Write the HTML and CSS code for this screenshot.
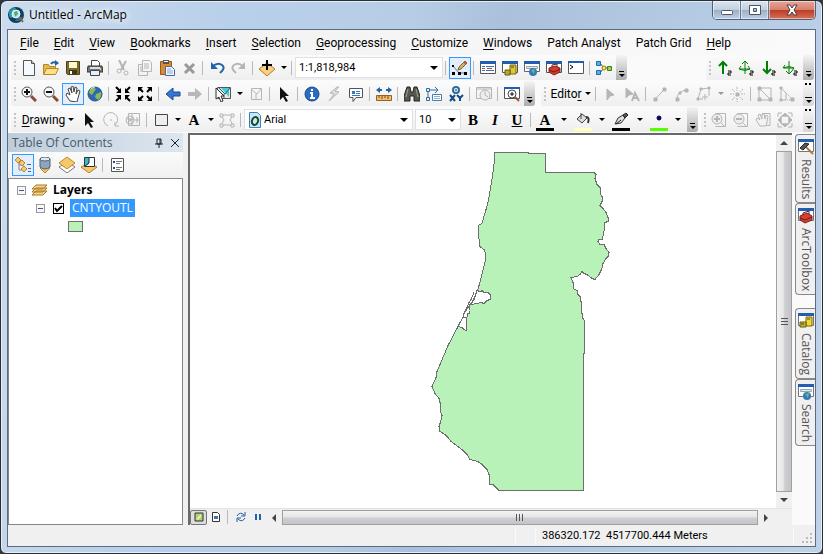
FILE: index.html
```
<!DOCTYPE html>
<html lang="en">
<head>
  <meta charset="UTF-8">
  <title>Untitled - ArcMap</title>
  <link rel="stylesheet" href="styles.css">
</head>
<body>
<div class="window">

  <!-- Title bar -->
  <header class="titlebar">
    <svg class="app-icon" viewBox="0 0 16 16"><circle cx="8" cy="8" r="8" fill="#123c5c"/><path d="M1 5Q4 0 8 1Q5 5 6 9Q3 13 1 9z" fill="#2697a8"/><path d="M7 14Q9 10 15 10Q13 15 7 14z" fill="#2b6fa5"/><circle cx="8" cy="7" r="4" fill="#b7e6ee" stroke="#e6f5f8"/><path d="M6 5l3-1 1 3-3 3z" fill="#4eab69"/><path d="M11 10l4 5" stroke="#8b6334" stroke-width="2"/></svg>
    <h1>Untitled - ArcMap</h1>
    <div class="window-buttons">
      <button aria-label="Minimize"><svg viewBox="0 0 16 14"><rect x="2.500" y="7.500" width="11" height="4" rx="1" fill="#fff" stroke="#4b5468"/></svg></button>
      <button aria-label="Maximize"><svg viewBox="0 0 16 14"><path d="M2.500 2.500h11v9h-11zM6.500 5.500v3h3v-3z" fill="#fff" fill-rule="evenodd" stroke="#4b5468"/></svg></button>
      <button class="close" aria-label="Close"><svg viewBox="0 0 16 14"><path d="M3 2h3l2 3 2-3h3l-3 5 3 5h-3l-2-3-2 3H3l3-5z" fill="#fff" stroke="#4b3a48"/></svg></button>
    </div>
  </header>

  <div class="client">

    <!-- Menu -->
    <nav class="menu">
      <a href="#"><u>F</u>ile</a>
      <a href="#"><u>E</u>dit</a>
      <a href="#"><u>V</u>iew</a>
      <a href="#"><u>B</u>ookmarks</a>
      <a href="#"><u>I</u>nsert</a>
      <a href="#"><u>S</u>election</a>
      <a href="#"><u>G</u>eoprocessing</a>
      <a href="#"><u>C</u>ustomize</a>
      <a href="#"><u>W</u>indows</a>
      <a href="#">Patch Analyst</a>
      <a href="#">Patch Grid</a>
      <a href="#"><u>H</u>elp</a>
    </nav>

    <!-- Standard toolbar -->
    <div class="toolbar-row">
      <div class="toolbar">
        <span class="grip"></span>
        <button aria-label="New"><svg viewBox="0 0 16 16"><path d="M2.500.5h8l3 3v12h-11z" fill="#f5f9ff" stroke="#555"/><path d="M10.500.5v3h3" fill="#ccd" stroke="#555"/></svg></button>
        <button aria-label="Open"><svg viewBox="0 0 16 16"><path d="M.5 14.500v-10h5l1 2h6v2" fill="#e5b84f" stroke="#b58a25"/><path d="M.5 14.500l3-6h12l-3 6z" fill="#ffe08a" stroke="#b58a25"/><path d="M8 4q2-3 5-1" fill="none" stroke="#24609d" stroke-width="2"/><path d="M12 0l4 3-4 3z" fill="#24609d"/></svg></button>
        <button aria-label="Save"><svg viewBox="0 0 16 16"><path d="M1.500 1.500h13v13h-12l-1-1z" fill="#7c6a29" stroke="#4b421d"/><path d="M4 2h8v6H4z" fill="#fff5cc"/><path d="M4 10h8v4H4z" fill="#403719"/><path d="M5 11h2v3H5z" fill="#fff"/></svg></button>
        <button aria-label="Print"><svg viewBox="0 0 16 16"><path d="M4.500 6V.5h6l2 2V6" fill="#fff" stroke="#444"/><path d="M1 6h14l1 6H0z" fill="#777" stroke="#333"/><path d="M3 8h10" stroke="#ddd" stroke-width="2"/><path d="M3.500 10.500h9v5h-9z" fill="#e2efff" stroke="#444"/><path d="M13 9h1" stroke="#f8ce45" stroke-width="2"/></svg></button>
        <span class="sep"></span>
        <button aria-label="Cut"><svg class="off" viewBox="0 0 16 16"><path d="M4 0l5 10M11 1L6 10" stroke-width="2"/><circle cx="4" cy="11" r="2"/><circle cx="11" cy="13" r="2"/></svg></button>
        <button aria-label="Copy"><svg class="off" viewBox="0 0 16 16"><path d="M5.500.5h7l2 2v9h-9zM5 4.500H1.500v11h9V12M7 4h5M7 6h5M7 8h5M3 7h2M3 9h2M3 11h2"/></svg></button>
        <button aria-label="Paste"><svg viewBox="0 0 16 16"><path d="M1.500 1.500h11v13h-11z" fill="#d88a35" stroke="#9a5718"/><path d="M4 0h6v4H4z" fill="#555"/><path d="M5 1h4v1H5z" fill="#fff"/><path d="M6.500 6.500h6l3 3v6h-9z" fill="#f6faff" stroke="#46689b"/><path d="M8 9h4M8 11h6M8 13h6" stroke="#83a6d3"/></svg></button>
        <button aria-label="Delete"><svg class="off" viewBox="0 0 16 16"><path d="M4 4l9 9M13 4l-9 9" stroke="#999" stroke-width="3"/></svg></button>
        <span class="sep"></span>
        <button aria-label="Undo"><svg viewBox="0 0 16 16"><path d="M4 6q5-4 9-1t-2 8" fill="none" stroke="#2363a5" stroke-width="2"/><path d="M2 2v7h7z" fill="#2363a5"/></svg></button>
        <button aria-label="Redo"><svg class="off" viewBox="0 0 16 16"><path d="M12 6Q7 2 3 5t2 8" stroke-width="2"/><path d="M14 2v7H7z" fill="#b5b5b5" stroke="none"/></svg></button>
        <span class="sep"></span>
        <button aria-label="Add Data"><svg viewBox="0 0 16 16"><path d="M0 9l8-6 8 6-8 7z" fill="#f6cf83" stroke="#b57a2c"/><path d="M8 0v10M3 5h10" stroke="#000" stroke-width="2"/></svg></button>
        <button class="drop" aria-label="Add Data list"></button>
        <span class="sep"></span>
        <select class="scale" aria-label="Map scale"><option>1:1,818,984</option></select>
        <span class="sep"></span>
        <button class="on" aria-label="Editor Toolbar"><svg viewBox="0 0 16 16"><path d="M1 6l6 7h7" fill="none" stroke="#777"/><path d="M0 12h3v3H0zM6 12h3v3H6zM12 12h3v3h-3zM0 5h2v2H0z"/><path d="M6 10l1-3 6-6 2 2-6 6z" fill="#e5b24e" stroke="#665"/><path d="M12 2l2 2" stroke="#c25c4f" stroke-width="2"/></svg></button>
        <span class="sep"></span>
        <button aria-label="Table Of Contents"><svg viewBox="0 0 16 16"><path d="M.5 1.500h15v12H.5z" fill="#fff" stroke="#555"/><path d="M0 1h16v3H0z" fill="#215db0"/><path d="M2 6.500h3M2 10.500h3" stroke="#2876c7"/><path d="M6 6.500h8M6 10.500h8" stroke="#2d70c5"/><path d="M2 8.500h3M7 8.500h5" stroke="#c94134"/></svg></button>
        <button aria-label="Catalog"><svg viewBox="0 0 16 16"><path d="M.5 1.500h15v11H.5z" fill="#fff" stroke="#555"/><path d="M0 1h16v3H0z" fill="#215db0"/><path d="M8 5h6v9H8z" fill="#e1c72d" stroke="#75660e"/><path d="M3 10h5v5H3z" fill="#bba922" stroke="#665b11"/><path d="M9 7h3" stroke="#443"/></svg></button>
        <button aria-label="Search"><svg viewBox="0 0 16 16"><path d="M.5 1.500h15v10H.5z" fill="#fff" stroke="#666"/><path d="M0 1h16v3H0z" fill="#215db0"/><path d="M2.500 6.500h11v2h-11z" fill="#dfe8f3" stroke="#94a6bb"/><circle cx="9" cy="12" r="4" fill="#3778bd"/><path d="M7 10l4-1-1 5z" fill="#69b96d"/></svg></button>
        <button aria-label="ArcToolbox"><svg viewBox="0 0 16 16"><path d="M.5 1.500h15v11H.5z" fill="#fff" stroke="#555"/><path d="M0 1h16v3H0z" fill="#215db0"/><path d="M3 8l6-2 5 2v4l-6 3-5-3z" fill="#d53a2c" stroke="#83251d"/><path d="M6 7V5l5-1v3M3 10l5 2 6-3" fill="none" stroke="#631d1b"/></svg></button>
        <button aria-label="Python"><svg viewBox="0 0 16 16"><path d="M.5 1.500h15v12H.5z" fill="#fff" stroke="#555"/><path d="M0 1h16v2H0z" fill="#215db0"/><path d="M2 5l3 2-3 2" fill="none" stroke="#000"/></svg></button>
        <span class="sep"></span>
        <button aria-label="ModelBuilder"><svg viewBox="0 0 16 16"><path d="M4 3l3 4M4 13l3-4M9 8h3" stroke="#444"/><path d="M.5 1.500h4v4h-4zM.5 10.500h4v4h-4z" fill="#55b1ed" stroke="#1d6da8"/><circle cx="8" cy="8" r="2" fill="#ffe05c" stroke="#998118"/><path d="M11.500 6.500h4v4h-4z" fill="#8fd64c" stroke="#42801b"/></svg></button>
        <button class="more" aria-label="Toolbar options"></button>
      </div>
      <div class="toolbar right">
        <span class="grip"></span>
        <button aria-label="Move up"><svg class="green" viewBox="0 0 16 16"><path d="M7 2v12M3 6l4-4 4 4" stroke-width="2"/><path class="two" d="M12 11h3v2h-3v2h3"/></svg></button>
        <button aria-label="Rotate up"><svg class="green" viewBox="0 0 16 16"><path d="M7 1v13M4 4l3-3 3 3M3 6L1 9q6 3 11 0l-2-3M2 9h10"/><path class="two" d="M12 11h3v2h-3v2h3"/></svg></button>
        <button aria-label="Move down"><svg class="green" viewBox="0 0 16 16"><path d="M7 1v12M3 9l4 4 4-4" stroke-width="2"/><path class="two" d="M12 11h3v2h-3v2h3"/></svg></button>
        <button aria-label="Rotate down"><svg class="green" viewBox="0 0 16 16"><path d="M7 1v13M4 11l3 3 3-3M3 5L1 8q6-3 11 0l-2 3M2 8h10"/><path class="two" d="M12 11h3v2h-3v2h3"/></svg></button>
        <button class="more" aria-label="Toolbar options"></button>
      </div>
    </div>

    <!-- Tools and editor toolbars -->
    <div class="toolbar-row">
      <div class="toolbar">
        <span class="grip"></span>
        <button aria-label="Zoom In"><svg viewBox="0 0 16 16"><path d="M10 10l5 5" stroke="#8a4b38" stroke-width="3"/><circle cx="6" cy="6" r="5" fill="#f5f8fb" stroke="#555"/><path d="M3 6h6M6 3v6" stroke="#111" stroke-width="2"/></svg></button>
        <button aria-label="Zoom Out"><svg viewBox="0 0 16 16"><path d="M10 10l5 5" stroke="#8a4b38" stroke-width="3"/><circle cx="6" cy="6" r="5" fill="#f5f8fb" stroke="#555"/><path d="M3 6h6" stroke="#111" stroke-width="2"/></svg></button>
        <button class="on" aria-label="Pan"><svg viewBox="0 0 16 16"><path d="M5 15l-4-6 1-2 3 2L3 3l2-1 2 5-1-6 2-1 1 6 1-5 2 1-1 6 2-4 2 1-2 7-1 4z" fill="#fff" stroke="#444"/></svg></button>
        <button aria-label="Full Extent"><svg viewBox="0 0 16 16"><circle cx="8" cy="8" r="7" fill="#2c68b4" stroke="#245888"/><path d="M3 3q4-2 6 0L7 6 5 9 2 7zM9 8l5-2q1 5-3 8L8 11z" fill="#8db957"/><path d="M4 3q2-2 4-2" stroke="#d4f0ef" fill="none"/></svg></button>
        <span class="sep"></span>
        <button aria-label="Fixed Zoom In"><svg viewBox="0 0 16 16"><path d="M1 1l4 4M15 1l-4 4M1 15l4-4M15 15l-4-4" stroke="#000" stroke-width="2"/><path d="M6 2v5H1zM10 2v5h5zM1 9h5v5zM10 9h5l-5 5z"/></svg></button>
        <button aria-label="Fixed Zoom Out"><svg viewBox="0 0 16 16"><path d="M3 3l3 3M13 3l-3 3M3 13l3-3M13 13l-3-3" stroke="#000" stroke-width="2"/><path d="M1 1h5L1 6zM10 1h5v5zM1 10v5h5zM15 10v5h-5z"/></svg></button>
        <span class="sep"></span>
        <button aria-label="Back"><svg viewBox="0 0 16 16"><path d="M1 8l7-6v4h7v4H8v4z" fill="#3976cf" stroke="#174b98"/></svg></button>
        <button aria-label="Forward"><svg viewBox="0 0 16 16"><path d="M15 8L8 2v4H1v4h7v4z" fill="#b8b8b8"/></svg></button>
        <span class="sep"></span>
        <button aria-label="Select Features"><svg viewBox="0 0 16 16"><path d="M2.500 1.500h13v11h-13z" fill="#e2e9ea" stroke="#555"/><path d="M6 2h8v9z" fill="#38d0dc"/><path d="M4 2l6 6 5-6M9 8v5" fill="none" stroke="#555"/><path d="M1 2l8 8H6l2 5-2 1-2-5-3 2z" fill="#fff" stroke="#333"/></svg></button>
        <button class="drop" aria-label="Selection list"></button>
        <button aria-label="Clear Selection"><svg class="off" viewBox="0 0 16 16"><path d="M3.500 2.500h10v11h-10zM4 4l5 4 4-5M8 8v5"/></svg></button>
        <span class="sep"></span>
        <button aria-label="Select Elements"><svg viewBox="0 0 16 16"><path d="M4 1l9 9H9l3 5-2 1-3-5-3 3z" fill="#111"/></svg></button>
        <span class="sep"></span>
        <button aria-label="Identify"><svg viewBox="0 0 16 16"><circle cx="8" cy="8" r="7" fill="#2a6cc1" stroke="#174784"/><path d="M8 3v2M6 7h2v5M6 12h5" fill="none" stroke="#fff" stroke-width="2"/></svg></button>
        <button aria-label="Hyperlink"><svg class="off" viewBox="0 0 16 16"><path d="M11 1L4 7l4 1-5 7 10-9-4-1 4-4z" fill="#ddd"/></svg></button>
        <button aria-label="HTML Popup"><svg viewBox="0 0 16 16"><path d="M1.500 2.500h13v9H8l-3 4v-4H1.500z" fill="#fff" stroke="#555"/><path d="M4 5h3v3H4z" fill="#3478bd"/><path d="M8 5.500h4M8 7.500h4M4 9.500h8" stroke="#3478bd"/></svg></button>
        <span class="sep"></span>
        <button aria-label="Measure"><svg viewBox="0 0 16 16"><path d="M0 4l4-3v2h8V1l4 3-4 3V5H4v2z" fill="#2760a4"/><path d="M6 1h4v5H6z" fill="#f4f4f4"/><path d="M.5 9.500h15v5H.5z" fill="#f2bf69" stroke="#995f2a"/><path d="M3 10v2M6 10v3M9 10v2M12 10v3" stroke="#754b24"/></svg></button>
        <span class="sep"></span>
        <button aria-label="Find"><svg viewBox="0 0 16 16"><path d="M3 1h3l1 5h2l1-5h3l3 9v5h-6v-5H6v5H0v-5z" fill="#55584f" stroke="#252723"/><path d="M4 3L2 11M12 3l2 8" stroke="#a0a298"/></svg></button>
        <button aria-label="Find Route"><svg viewBox="0 0 16 16"><path d="M2 13V4h10M9 1l3 3-3 3" fill="none" stroke="#2d6c9f"/><path d="M.5 11.500h3v3h-3zM.5 2.500h3v3h-3z" fill="#eef" stroke="#2d6c9f"/><path d="M6.500 8.500h9v6h-9z" fill="#fff" stroke="#477fad"/><path d="M8 10.500h6M8 12.500h6" stroke="#90afc6"/></svg></button>
        <button aria-label="Go To XY"><svg viewBox="0 0 16 16"><circle cx="8" cy="4" r="3" fill="#fff" stroke="#286a9e" stroke-width="2"/><circle cx="8" cy="4" r="1" fill="#286a9e"/><path d="M2 9l5 6M7 9l-5 6M9 9l3 3 3-3M12 12v3" fill="none" stroke="#154d82" stroke-width="2"/></svg></button>
        <span class="sep"></span>
        <button aria-label="Time Slider"><svg class="off" viewBox="0 0 16 16"><path d="M.5 1.500h15v11H.5zM0 3h16"/><circle cx="9" cy="9" r="5" fill="#eee"/><path d="M9 5v4l3 2"/></svg></button>
        <span class="sep"></span>
        <button aria-label="Viewer Window"><svg viewBox="0 0 16 16"><path d="M.5 1.500h15v11H.5z" fill="#fff" stroke="#555"/><path d="M0 1h16v2H0z" fill="#215db0"/><path d="M11 11l4 4" stroke="#9a5546" stroke-width="2"/><circle cx="8" cy="8" r="4" fill="#fff" stroke="#444"/><path d="M6 8h4M8 6v4" stroke="#111"/></svg></button>
        <button class="more" aria-label="Toolbar options"></button>
      </div>
      <div class="toolbar editor">
        <span class="grip"></span>
        <button class="label">Edito<u>r</u></button>
        <span class="sep"></span>
        <button aria-label="Edit Tool"><svg class="off" viewBox="0 0 16 16"><path d="M5 3l7 6-4 1-3 4z" fill="#b5b5b5"/></svg></button>
        <button aria-label="Edit Annotation"><svg class="off" viewBox="0 0 16 16"><path d="M2 2l7 6-4 1-3 3z" fill="#b5b5b5"/><path d="M8 15l3-8 4 8M9 12h4" stroke-width="2"/></svg></button>
        <span class="sep"></span>
        <button aria-label="Straight Segment"><svg class="off" viewBox="0 0 16 16"><path d="M3 13L13 3"/><path d="M2 12h3v3H2zM11 2h3v3h-3z" fill="#b5b5b5"/></svg></button>
        <button aria-label="Arc Segment"><svg class="off" viewBox="0 0 16 16"><path d="M3 13q0-8 10-9"/><path d="M2 12h3v3H2zM11 3h3v3h-3zM5 6h2v2H5z" fill="#b5b5b5"/></svg></button>
        <button aria-label="Trace"><svg class="off" viewBox="0 0 16 16"><path d="M2 13L5 3l8-1v8M2 13h5M9 8v6M6 11h6"/><path d="M1 12h2v2H1zM4 2h2v2H4zM12 1h2v2h-2z" fill="#b5b5b5"/></svg></button>
        <button class="drop off" aria-label="Trace list"></button>
        <button aria-label="Point"><svg class="off" viewBox="0 0 16 16"><path d="M7 7h3v3H7z" fill="#b5b5b5"/><path d="M8 1v4M8 12v4M1 8h4M12 8h4M3 3l3 3M14 3l-3 3M3 14l3-3M14 14l-3-3" stroke-dasharray="2 1"/></svg></button>
        <span class="sep"></span>
        <button aria-label="Edit Vertices"><svg class="off" viewBox="0 0 16 16"><path d="M2 2v12h12L2 2h12v12"/><path d="M1 1h3v3H1zM1 12h3v3H1zM12 12h3v3h-3z" fill="#b5b5b5"/></svg></button>
        <button aria-label="Reshape"><svg class="off" viewBox="0 0 16 16"><path d="M2 2v12h5V7L2 2"/><path d="M7 7l7 7H8" stroke-dasharray="2 1"/><path d="M1 1h2v2H1zM1 13h2v2H1zM12 12h3v3h-3z" fill="#b5b5b5"/></svg></button>
        <button class="more chevrons" aria-label="Toolbar options"></button>
      </div>
    </div>

    <!-- Drawing toolbar -->
    <div class="toolbar-row">
      <div class="toolbar">
        <span class="grip"></span>
        <button class="label wide"><u>D</u>rawing</button>
        <button aria-label="Select Elements"><svg viewBox="0 0 16 16"><path d="M4 1l9 9H9l3 5-2 1-3-5-3 3z" fill="#111"/></svg></button>
        <button aria-label="Rotate"><svg class="off" viewBox="0 0 16 16"><path d="M5 14A7 7 0 1 1 12 13M12 10v4h4M7 8h2"/></svg></button>
        <button aria-label="Zoom to Selected"><svg class="off" viewBox="0 0 16 16"><path d="M3.500 1.500h11v12h-11zM7 2v11M12 5v6M9 8h6M2 7h7"/><circle cx="5" cy="8" r="4"/><path d="M3 8h4M5 6v4"/></svg></button>
        <span class="sep"></span>
        <button aria-label="Rectangle"><svg viewBox="0 0 16 16"><path d="M2.500 2.500h12v11h-12z" fill="#eee" stroke="#444"/></svg></button>
        <button class="drop" aria-label="Shapes"></button>
        <button class="glyph" aria-label="Text">A</button>
        <button class="drop" aria-label="Text tools"></button>
        <button aria-label="Edit Vertices"><svg class="off" viewBox="0 0 16 16"><path d="M2 13L5 8 2 3h12l-3 5 3 5z"/><path d="M1 2h3v3H1zM12 2h3v3h-3zM1 12h3v3H1zM12 12h3v3h-3z" fill="#eee"/></svg></button>
        <span class="sep"></span>
        <span class="font-box">
          <svg viewBox="0 0 16 16"><path d="M2.500.5h8l3 3v12h-11z" fill="#c9e7f7" stroke="#417fbb"/><ellipse cx="8" cy="9" rx="3" ry="4" transform="rotate(20 8 9)" fill="none" stroke="#164b26" stroke-width="2"/></svg>
          <select aria-label="Font"><option>Arial</option></select>
        </span>
        <select class="size" aria-label="Font size"><option>10</option></select>
        <button class="glyph" aria-label="Bold">B</button>
        <button class="glyph italic" aria-label="Italic">I</button>
        <button class="glyph under" aria-label="Underline">U</button>
        <span class="sep"></span>
        <button class="glyph swatch black" aria-label="Font color">A</button>
        <button class="drop big" aria-label="Font colors"></button>
        <button class="swatch yellow" aria-label="Fill color"><svg viewBox="0 0 16 16"><path d="M2 7l5-5 5 4-5 5zM6 1v6" fill="#ddd" stroke="#444"/><path d="M11 5q4 0 2 6" fill="none" stroke="#333" stroke-width="2"/></svg></button>
        <button class="drop big" aria-label="Fill colors"></button>
        <button class="swatch black" aria-label="Line color"><svg viewBox="0 0 16 16"><path d="M2 12l3-6 5-3 2 3-4 5z" fill="#ddd" stroke="#333"/><path d="M10 3l3-2 2 2-3 3zM3 12l5-4" fill="#555" stroke="#222"/></svg></button>
        <button class="drop big" aria-label="Line colors"></button>
        <button class="swatch lime" aria-label="Marker color"><svg viewBox="0 0 16 16"><circle cx="8" cy="6" r="2" fill="#00a" stroke="#003"/></svg></button>
        <button class="drop big" aria-label="Marker colors"></button>
        <button class="more" aria-label="Toolbar options"></button>
      </div>
      <div class="toolbar layout">
        <span class="grip"></span>
        <button aria-label="Layout Zoom In"><svg class="off" viewBox="0 0 16 16"><path d="M4.500 1.500h10v13h-10M9 10l4 4"/><circle cx="6" cy="7" r="5" fill="#eee"/><path d="M3 7h6M6 4v6" stroke-width="2"/></svg></button>
        <button aria-label="Layout Zoom Out"><svg class="off" viewBox="0 0 16 16"><path d="M4.500 1.500h10v13h-10M9 10l4 4"/><circle cx="6" cy="7" r="5" fill="#eee"/><path d="M3 7h6" stroke-width="2"/></svg></button>
        <button aria-label="Layout Pan"><svg class="off" viewBox="0 0 16 16"><path d="M7 1.500h8v12h-3M5 14l-4-6 1-2 3 2-2-5 2-1 2 5V2h2l1 5 1-4 2 1-1 6-1 4z"/></svg></button>
        <button aria-label="Zoom Whole Page"><svg class="off" viewBox="0 0 16 16"><path d="M1 5V1h4M11 1h4v4M1 11v4h4M11 15h4v-4M4 4h8v8H4z"/><path d="M8 1l3 3H5zM8 15l3-3H5zM1 8l3-3v6zM15 8l-3-3v6z" fill="#b5b5b5"/></svg></button>
        <button class="more chevrons" aria-label="Toolbar options"></button>
      </div>
    </div>

    <!-- Work area -->
    <main class="work">
      <aside class="toc">
        <div class="toc-title">
          <h2>Table Of Contents</h2>
          <button aria-label="Auto Hide"><svg viewBox="0 0 10 10"><path d="M3 1h4v5H3zM6 1v5M1 6h8M5 6v4" fill="none" stroke="#222"/></svg></button>
          <button aria-label="Close panel"><svg viewBox="0 0 10 10"><path d="M1 1l8 8M9 1L1 9" stroke="#222" stroke-width="1"/></svg></button>
        </div>
        <div class="toc-tools">
          <button class="on" aria-label="List By Drawing Order"><svg viewBox="0 0 16 16"><path d="M4 4v9h3M4 8h5" fill="none" stroke="#888"/><path d="M0 3l3-3 3 3-3 3zM4 6l3-3 3 3-3 3zM6 12l3-3 3 3-3 3z" fill="#f6c76b" stroke="#b9883b"/><path d="M12 7.500h4M13 11.500h3M13 14.500h3" stroke="#336bab"/></svg></button>
          <button aria-label="List By Source"><svg viewBox="0 0 16 16"><path d="M3 11l5-3 5 3-5 5z" fill="#f8c566" stroke="#b97f2b"/><path d="M3 2v8q5 4 10 0V2z" fill="#8ea5be" stroke="#4e6073"/><ellipse cx="8" cy="2" rx="5" ry="2" fill="#dce8f4" stroke="#4e6073"/></svg></button>
          <button aria-label="List By Visibility"><svg viewBox="0 0 16 16"><path d="M0 10l8-5 8 5-8 6z" fill="#fff" stroke="#777"/><path d="M0 6l8-6 8 6-8 6z" fill="#f6c86c" stroke="#c1842d"/></svg></button>
          <button aria-label="List By Selection"><svg viewBox="0 0 16 16"><path d="M0 10l8-4 8 4-8 6z" fill="#f6c76d" stroke="#b9802c"/><path d="M3.500.5h10v9h-10z" fill="#fff" stroke="#333"/><path d="M4 1h4v6l-4 2z" fill="#2ec0d1"/><path d="M8 1v5l-4 3" fill="none" stroke="#222"/></svg></button>
          <span class="sep"></span>
          <button aria-label="Options"><svg viewBox="0 0 16 16"><path d="M2.500 1.500h12v13h-12z" fill="#fff" stroke="#555"/><path d="M7 4.500h6M7 6.500h4M7 10.500h6M7 12.500h4" stroke="#777"/><path d="M4 4h2v2H4zM4 10h2v2H4z" fill="#234b88"/></svg></button>
        </div>
        <ul class="tree">
          <li>
            <div class="node">
              <button class="toggle" aria-label="Collapse Layers"></button>
              <svg class="layers-icon" viewBox="0 0 16 14"><path d="M0 12l4-4h11l-4 4zM0 9l4-4h11l-4 4zM0 6l4-4h11l-4 4z" fill="#f7d587" stroke="#a97926"/></svg>
              <b>Layers</b>
            </div>
            <ul>
              <li>
                <div class="node">
                  <button class="toggle" aria-label="Collapse CNTYOUTL"></button>
                  <input type="checkbox" id="cntyoutl" checked>
                  <label for="cntyoutl">CNTYOUTL</label>
                </div>
                <div class="symbol"></div>
              </li>
            </ul>
          </li>
        </ul>
      </aside>

      <section class="view">
        <div class="map">
          <svg viewBox="190 136 586 372" role="img" aria-label="County outline">
            <path class="county" d="M494.500 152.500H528v1H545.500v19H593.500L596 175l-1 4 2 6 3 3v6l2 3v5l-2 4 3 3 3 4 2 5v4l-3 1-1 9-1 5-1 3h-3l-1 2 2 3h4l2 4 3 4-1 4-2 2-3 5-1 5-3 6-4 5-3-1-5-4-3-1-2-2-2 3-3 2-6 1 2 5v6l4 2 1 4 2 2v4l1 1v8l1 4 1 5L584.500 321V354h-1V490.500H498.500L493 485h-4V475l-2-5-5-5-4-3-8-2-3-5-4-4-5-4-7-5-3-4-3-3-5-3-1-5 2-6 1-5-2-5V403l-1-4-4-5-3-7 4-9v-3l1-3 3-7 8-19 9-17 8-14 12-22 4-14 4-16 1-8-2-5-4-3-1-8-1-10v-3l4-2 6-21 4-23 2-15 1-8z"/>
            <path class="bay" d="M477 291l3 1h1l1-1 2 2h4l2 2v5l-3 1-3 3-3-1-4 1-6 1 3-5z"/>
            <path class="bay" d="M470 305l-1 6v3h-1l-1 4h-4v-3l3-4zM463 318h3v5l1 4-1 1v3l-2-1-2-2-4-1 2-4z"/>
            <path class="spit" d="M474 293l-3 7-2 3-5 11"/>
          </svg>
        </div>
        <div class="vscroll">
          <button class="arrow up" aria-label="Scroll up"></button>
          <div class="thumb"></div>
          <button class="arrow down" aria-label="Scroll down"></button>
        </div>
        <div class="view-bar">
          <button class="pressed" aria-label="Data View"><svg viewBox="0 0 10 10"><path d="M1 1h8v8H1z" fill="#a8d27b" stroke="#333"/><path d="M2 7l5-5v3L4 8z" fill="#f4e99d"/></svg></button>
          <button aria-label="Layout View"><svg viewBox="0 0 10 10"><path d="M1.500.5h5l2 2v7h-7z" fill="#fff" stroke="#333"/><path d="M3 4h4v3H3z" fill="#3d79ad"/></svg></button>
          <span class="sep"></span>
          <button aria-label="Refresh View"><svg viewBox="0 0 10 10"><path d="M1 4q3-5 7-1M9 6Q6 11 2 7M9 0v4H5M1 10V6h4" fill="none" stroke="#245d9d"/></svg></button>
          <button aria-label="Pause Drawing"><svg viewBox="0 0 10 10"><path d="M2 2h2v6H2zM6 2h2v6H6z" fill="#2360ab"/></svg></button>
          <div class="hscroll">
            <button class="arrow left" aria-label="Scroll left"></button>
            <div class="thumb"></div>
            <button class="arrow rightward" aria-label="Scroll right"></button>
          </div>
        </div>
      </section>

      <nav class="dock">
        <button><svg viewBox="0 0 16 16"><path d="M.5.5h15v12H.5z" fill="#fff" stroke="#777"/><path d="M0 0h16v3H0z" fill="#215db0"/><path d="M6 6l9 9" stroke="#b17843" stroke-width="2"/><path d="M2 9l5-5 4 1-6 6z" fill="#555" stroke="#222"/></svg>Results</button>
        <button><svg viewBox="0 0 16 16"><path d="M.5.5h15v12H.5z" fill="#fff" stroke="#777"/><path d="M0 0h16v3H0z" fill="#215db0"/><path d="M2 8l7-3 5 3v4l-7 3-5-3z" fill="#db3d32" stroke="#7d211c"/><path d="M5 7V5l6-2v3M2 10l5 2 7-3" fill="none" stroke="#631d1b"/></svg>ArcToolbox</button>
        <button class="gap"><svg viewBox="0 0 16 16"><path d="M.5.5h15v12H.5z" fill="#fff" stroke="#777"/><path d="M0 0h16v3H0z" fill="#215db0"/><path d="M8 4h6v9H8z" fill="#f0d831" stroke="#75660e"/><path d="M2 9h6v5H2z" fill="#c9b42b" stroke="#665b11"/><path d="M9 6h3M3 11h3" stroke="#443"/></svg>Catalog</button>
        <button><svg viewBox="0 0 16 16"><path d="M.5.5h15v12H.5z" fill="#fff" stroke="#777"/><path d="M0 0h16v3H0z" fill="#215db0"/><path d="M2.500 5.500h11v2h-11z" fill="#dfe8f3" stroke="#94a6bb"/><circle cx="9" cy="12" r="4" fill="#3778bd"/><path d="M7 10l4-1-1 5z" fill="#69b96d"/></svg>Search</button>
      </nav>
    </main>

    <footer class="status">
      <span class="cell message"></span>
      <span class="cell small"></span>
      <span class="cell coords">386320.172&nbsp; 4517700.444 Meters</span>
      <svg viewBox="0 0 10 10"><path d="M8 0h2v2H8zM4 4h2v2H4zM8 4h2v2H8zM0 8h2v2H0zM4 8h2v2H4zM8 8h2v2H8z" fill="#bbb"/></svg>
    </footer>
  </div>
</div>
</body>
</html>
```

FILE: styles.css
```
* {
  box-sizing: border-box;
}

body {
  margin: 0;
  background: #33383d;
  color: #000;
  font: 12px/16px Roboto, "Open Sans", sans-serif;
}

h1, h2, ul {
  margin: 0;
  padding: 0;
  font-size: 12px;
  font-weight: normal;
  list-style: none;
}

button {
  flex: none;
  margin: 0;
  padding: 0;
  border: 0;
  background: none;
  color: inherit;
  font: inherit;
}

svg {
  display: block;
  flex: none;
}

/* Window frame */
.window {
  display: flex;
  flex-direction: column;
  height: 100vh;
  min-height: 480px;
  padding: 0 6px 6px;
  border: 1px solid #2a2f36;
  border-radius: 7px 7px 6px 6px;
  background: linear-gradient(100deg, #cbdcee 0, #b9d0ea 25%, #b7cde6 45%, #abc0da 55%, #b4cae3 75%, #bed3ea 100%);
  box-shadow: inset 0 0 0 1px #e5eef8;
}

.titlebar {
  display: flex;
  flex: none;
  align-items: center;
  height: 28px;
}

.app-icon {
  width: 16px;
  height: 16px;
  margin-left: 1px;
}

.titlebar h1 {
  flex: 1;
  margin-left: 5px;
  font-family: "Open Sans", sans-serif;
  text-shadow: 0 0 8px #fff, 0 0 8px #fff;
}

.window-buttons {
  display: flex;
  align-self: flex-start;
  height: 19px;
  border: 1px solid #536073;
  border-top: 0;
  border-radius: 0 0 5px 5px;
  overflow: hidden;
}

.window-buttons button {
  display: flex;
  align-items: center;
  justify-content: center;
  width: 28px;
  border-right: 1px solid #68778b;
  background: linear-gradient(#dce6f1 0, #c1cfdf 48%, #9cafc7 50%, #bdd0e5 100%);
  box-shadow: inset 0 0 0 1px rgba(255, 255, 255, 0.5);
}

.window-buttons .close {
  width: 46px;
  border-right: 0;
  background: linear-gradient(#e8a797 0, #d67f6d 48%, #bd3a23 50%, #d8715a 100%);
}

.window-buttons svg {
  width: 16px;
  height: 14px;
}

.client {
  display: flex;
  flex: 1;
  flex-direction: column;
  min-height: 0;
  border: 1px solid #5c6c7c;
  background: #f0f0f0;
}

/* Menu */
.menu {
  display: flex;
  flex: none;
  align-items: center;
  gap: 15px;
  height: 25px;
  padding-left: 12px;
  background: linear-gradient(90deg, #f0f0f0, #fafafa);
  white-space: nowrap;
}

.menu a {
  color: #000;
  text-decoration: none;
}

u {
  text-underline-offset: 2px;
}

/* Toolbars */
.toolbar-row {
  display: flex;
  flex: none;
  justify-content: space-between;
  height: 26px;
  padding: 0 1px 1px 3px;
  background: #fafafa;
}

.toolbar {
  display: flex;
  align-items: center;
  height: 25px;
  border-radius: 3px;
  background: linear-gradient(#fbfbfb, #efefef);
}

.toolbar button,
.toc-tools button {
  display: flex;
  align-items: center;
  justify-content: center;
  width: 22px;
  height: 22px;
}

.toolbar svg,
.toc-tools svg {
  width: 16px;
  height: 16px;
}

.toolbar .on,
.toc-tools .on {
  border: 1px solid #3399ff;
  background: #e4eefa;
}

.grip {
  flex: none;
  width: 2px;
  height: 14px;
  margin: 0 2px 0 3px;
  background: repeating-linear-gradient(#c4c4c4 0 2px, transparent 2px 4px);
}

.sep {
  flex: none;
  width: 1px;
  height: 14px;
  margin: 0 3px 0 2px;
  background: #b9b9b9;
}

svg.off {
  fill: none;
  stroke: #b5b5b5;
}

svg.green {
  fill: none;
  stroke: #008000;
}

svg.green .two {
  stroke: #000;
}

.toolbar .drop {
  width: 11px;
}

.toolbar .big {
  width: 16px;
}

.drop::after,
.label::after {
  content: "";
  border: 3px solid transparent;
  border-top-color: #000;
  border-bottom: 0;
}

.drop.off::after {
  border-top-color: #999;
}

.toolbar .label {
  width: 45px;
}

.label::after {
  margin-left: 3px;
}

.toolbar .wide {
  width: 60px;
}

.toolbar .more {
  flex-direction: column;
  justify-content: flex-end;
  gap: 2px;
  width: 11px;
  height: 25px;
  margin-left: 1px;
  padding-bottom: 3px;
  border-radius: 0 3px 3px 0;
  background: linear-gradient(#f4f4f4, #c9c9c9 60%, #aeaeae);
}

.more::before {
  content: "";
  width: 5px;
  height: 1px;
  background: #000;
}

.more::after {
  content: "";
  border: 3px solid transparent;
  border-top-color: #000;
  border-bottom: 0;
}

.toolbar .chevrons {
  margin-left: auto;
  background: linear-gradient(#f8f8f8, #d6d6d6);
}

.chevrons::before {
  width: 7px;
  height: 14px;
  border-bottom: 1px solid #000;
  background: linear-gradient(90deg, #000 2px, transparent 2px 4px, #000 4px 6px, transparent 6px) 0 0 / 7px 2px no-repeat;
}

.right .more {
  margin-left: 2px;
}

.editor {
  width: 273px;
}

.layout {
  width: 113px;
}

.toolbar select {
  height: 21px;
  padding: 0 18px 0 3px;
  border: 1px solid #dde1e6;
  border-radius: 0;
  background: #fff url("data:image/svg+xml,%3Csvg xmlns='http://www.w3.org/2000/svg' width='8' height='4'%3E%3Cpath d='M0 0h8L4 4z'/%3E%3C/svg%3E") no-repeat right 4px center;
  color: #000;
  font: inherit;
  font-size: 11px;
  line-height: 18px;
  appearance: none;
}

.toolbar .scale {
  width: 148px;
}

.font-box {
  display: flex;
  align-items: center;
  width: 169px;
  height: 21px;
  padding-left: 2px;
  border: 1px solid #dde1e6;
  background: #fff;
}

.toolbar .font-box select {
  flex: 1;
  height: 19px;
  padding-left: 1px;
  border: 0;
}

.toolbar .size {
  width: 46px;
  margin: 0 1px 0 2px;
}

.toolbar .glyph {
  font: bold 15px/16px "Liberation Serif", serif;
}

.toolbar .italic {
  font-style: italic;
}

.toolbar .under {
  text-decoration: underline;
}

.toolbar .swatch {
  background: linear-gradient(#000, #000) center 19px / 18px 3px no-repeat;
}

.toolbar .swatch.yellow {
  background-image: linear-gradient(#ffffbe, #ffffbe);
}

.toolbar .swatch.lime {
  background-image: linear-gradient(#55ff00, #55ff00);
}

/* Work area */
.work {
  display: flex;
  flex: 1;
  min-height: 0;
  font-family: "Open Sans", sans-serif;
}

.toc {
  display: flex;
  flex: none;
  flex-direction: column;
  width: 175px;
  margin-right: 5px;
}

.toc-title {
  display: flex;
  align-items: center;
  height: 19px;
  padding-left: 4px;
  background: linear-gradient(90deg, #bfcddb, #dce6f0);
}

.toc-title h2 {
  flex: 1;
  color: #495868;
}

.toc-title button {
  padding: 3px;
}

.toc-title svg,
.view-bar svg {
  width: 10px;
  height: 10px;
}

.toc-tools {
  display: flex;
  align-items: center;
  height: 26px;
  padding-left: 4px;
  background: linear-gradient(#fbfbfb, #f0f0f0);
}

.tree {
  flex: 1;
  padding: 2px 0 0 8px;
  border: 1px solid #828790;
  background: #fff;
}

.tree ul {
  padding-left: 19px;
}

.node {
  display: flex;
  align-items: center;
  height: 18px;
}

.toggle {
  width: 9px;
  height: 9px;
  border: 1px solid #999;
  background: linear-gradient(#3c5a9a, #3c5a9a) center / 5px 1px no-repeat #f6f6f6;
}

.layers-icon {
  width: 16px;
  height: 14px;
  margin: 0 5px 0 6px;
}

.node input {
  width: 11px;
  height: 11px;
  margin: 0 6px 0 8px;
  border: 1px solid #000;
  background: #fff;
  appearance: none;
}

.node input:checked {
  background: url("data:image/svg+xml,%3Csvg xmlns='http://www.w3.org/2000/svg' viewBox='0 0 9 9'%3E%3Cpath d='M1 4l2 3 5-5' fill='none' stroke='%23000' stroke-width='2'/%3E%3C/svg%3E");
}

.node label {
  height: 18px;
  padding: 0 2px;
  background: #3399ff;
  color: #fff;
  line-height: 18px;
}

.symbol {
  width: 15px;
  height: 11px;
  margin: 4px 0 0 32px;
  border: 1px solid #6e6e6e;
  background: #b9f2b9;
}

.view {
  display: grid;
  flex: 1;
  grid-template-columns: 1fr 16px;
  grid-template-rows: 1fr 17px;
  min-width: 0;
  border-top: 2px solid #696969;
  border-left: 2px solid #696969;
}

.map {
  min-height: 0;
  overflow: hidden;
  background: #fff;
}

.map svg {
  width: 100%;
  height: 100%;
}

.county,
.bay,
.spit {
  fill: #b9f2b9;
  stroke: #6e6e6e;
  shape-rendering: crispEdges;
}

.bay {
  fill: #fff;
}

.spit {
  fill: none;
}

.vscroll {
  display: flex;
  flex-direction: column;
}

.arrow {
  display: flex;
  align-items: center;
  justify-content: center;
  width: 16px;
  height: 16px;
}

.arrow::after {
  content: "";
  border: 4px solid transparent;
}

.up::after {
  border-top: 0;
  border-bottom-color: #444;
}

.down::after {
  border-bottom: 0;
  border-top-color: #444;
}

.left::after {
  border-left: 0;
  border-right-color: #444;
}

.rightward::after {
  border-right: 0;
  border-left-color: #444;
}

.thumb {
  display: flex;
  flex: 1;
  align-items: center;
  justify-content: center;
  border: 1px solid #a0a0a0;
  background: linear-gradient(90deg, #f3f3f3, #e6e6e8 45%, #cfcfd2 55%, #c3c4c8);
}

.thumb::after {
  content: "";
  width: 7px;
  height: 8px;
  background: repeating-linear-gradient(#555 0 1px, transparent 1px 3px);
}

.view-bar {
  display: flex;
  grid-column: 1 / 3;
  align-items: center;
  padding-right: 18px;
  border-top: 1px solid #e3e3e3;
  background: #f0f0f0;
}

.view-bar > button {
  display: flex;
  align-items: center;
  justify-content: center;
  width: 17px;
  height: 15px;
}

.view-bar .pressed {
  border: 1px solid #777;
  border-radius: 2px;
  background: #ddd;
}

.view-bar .sep {
  margin: 0 4px 0 3px;
}

.hscroll {
  display: flex;
  flex: 1;
  height: 15px;
}

.hscroll .thumb {
  background: linear-gradient(#f3f3f3, #e6e6e8 45%, #cfcfd2 55%, #c3c4c8);
}

.hscroll .thumb::after {
  width: 8px;
  height: 7px;
  background: repeating-linear-gradient(90deg, #555 0 1px, transparent 1px 3px);
}

/* Docked window tabs */
.dock {
  flex: none;
  width: 23px;
  padding: 1px 0 0 3px;
  background: #fafafa;
}

.dock button {
  display: flex;
  align-items: center;
  gap: 4px;
  width: 20px;
  padding: 4px 0 3px;
  border: 1px solid #888;
  border-right: 0;
  border-radius: 4px 0 0 4px;
  background: #f0f0f0;
  color: #555;
  line-height: 18px;
  writing-mode: vertical-rl;
}

.dock .gap {
  margin-top: 13px;
}

.dock svg {
  width: 16px;
  height: 16px;
}

/* Status bar */
.status {
  display: flex;
  flex: none;
  align-items: center;
  height: 21px;
  padding-right: 3px;
  font-size: 11px;
}

.cell {
  height: 18px;
  border-right: 1px solid #fafafa;
  line-height: 18px;
}

.message {
  flex: 1;
}

.small {
  width: 20px;
}

.coords {
  width: 258px;
  padding-left: 6px;
}

.status svg {
  width: 10px;
  height: 10px;
  margin: 4px 0 0 8px;
}
```
